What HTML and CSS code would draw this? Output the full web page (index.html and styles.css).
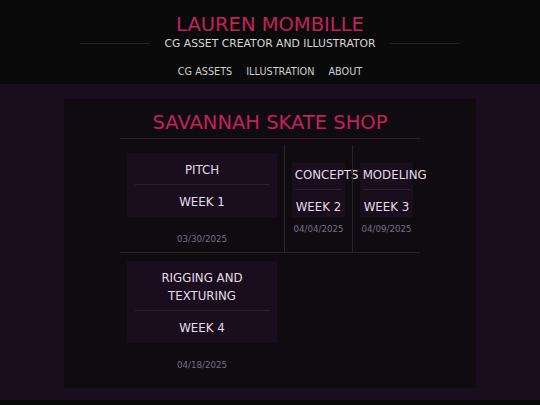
FILE: index.html
```html
<!DOCTYPE html>
<html lang="en">
<head>
    <meta charset="UTF-8">
    <meta name="viewport" content="width=device-width, initial-scale=1.0">
    <title>Lauren Mombille - Savannah Skate Shop</title>
    <link rel="stylesheet" href="styles.css">
</head>
<body>
    <header class="site-header">
        <h1 class="site-title">LAUREN MOMBILLE</h1>
        <p class="tagline">CG ASSET CREATOR AND ILLUSTRATOR</p>
        <nav class="site-nav">
            <a href="#">CG ASSETS</a>
            <a href="#">ILLUSTRATION</a>
            <a href="#">ABOUT</a>
        </nav>
    </header>

    <main class="content">
        <section class="project">
            <h2 class="project-title">SAVANNAH SKATE SHOP</h2>

            <div class="week-row">
                <div class="week week-wide">
                    <div class="card">
                        <div class="card-title">PITCH</div>
                        <div class="card-week">WEEK 1</div>
                    </div>
                    <div class="week-date">03/30/2025</div>
                </div>
                <div class="week week-narrow">
                    <div class="card">
                        <div class="card-title">CONCEPTS</div>
                        <div class="card-week">WEEK 2</div>
                    </div>
                    <div class="week-date">04/04/2025</div>
                </div>
                <div class="week week-narrow">
                    <div class="card">
                        <div class="card-title">MODELING</div>
                        <div class="card-week">WEEK 3</div>
                    </div>
                    <div class="week-date">04/09/2025</div>
                </div>
            </div>

            <div class="week-row">
                <div class="week week-wide">
                    <div class="card">
                        <div class="card-title">RIGGING AND TEXTURING</div>
                        <div class="card-week">WEEK 4</div>
                    </div>
                    <div class="week-date">04/18/2025</div>
                </div>
            </div>
        </section>
    </main>
</body>
</html>
```

FILE: styles.css
```css
body {
    font-family: 'DejaVu Sans', Verdana, sans-serif;
    background-color: #0a0a0a;
    margin: 0;
    padding: 0;
    color: #ddd8e0;
}

/* Cabeçalho */
.site-header {
    background-color: #0a0a0a;
    text-align: center;
    padding: 13px 0 6.5px;
}

.site-title {
    margin: 0;
    font-size: 19.5px;
    line-height: 23px;
    font-weight: normal;
    color: #c4215a;
}

.tagline {
    display: flex;
    align-items: center;
    justify-content: center;
    gap: 14px;
    margin: 0.5px 0 0;
    font-size: 10.8px;
    line-height: 13px;
    color: #d6d6d6;
}

.tagline::before,
.tagline::after {
    content: '';
    width: 70px;
    height: 1px;
    background-color: #232023;
}

.site-nav {
    display: flex;
    justify-content: center;
    gap: 14px;
    margin-top: 16px;
    font-size: 9.7px;
    line-height: 12px;
}

.site-nav a {
    color: #cfcfcf;
    text-decoration: none;
}

/* Conteúdo */
.content {
    background-color: #1a0d1e;
    padding: 15px 0 12px;
}

.project {
    width: 300px;
    margin: 0 auto;
    padding: 10.5px 56px;
    background-color: #0f0b10;
}

.project-title {
    margin: 0 0 6px;
    padding: 1px 0 4px;
    border-bottom: 1px solid #2a2329;
    font-size: 19.5px;
    line-height: 23px;
    font-weight: normal;
    text-align: center;
    color: #c4215a;
}

.week-row {
    display: flex;
    border-bottom: 1px solid #2a2329;
}

.week-row:last-child {
    border-bottom: none;
}

.week {
    display: flex;
    flex-direction: column;
    justify-content: center;
    padding: 8px 7px 7px;
    text-align: center;
}

.week + .week {
    border-left: 1px solid #2a2329;
}

.week-wide {
    width: 150px;
}

.week-narrow {
    width: 53px;
}

.card {
    background-color: #1a0e1e;
    padding: 5% 5% calc(5% - 2px);
    font-size: 11.8px;
    line-height: 1.5;
    color: #e2dde6;
}

.card-title {
    padding: 2px 0 4px;
    border-bottom: 1px solid #2b1f30;
}

.card-week {
    padding-top: 9px;
}

.week-date {
    margin-top: calc(11% + 1px);
    font-size: 8.7px;
    line-height: 1.2;
    color: #776e85;
}
```
